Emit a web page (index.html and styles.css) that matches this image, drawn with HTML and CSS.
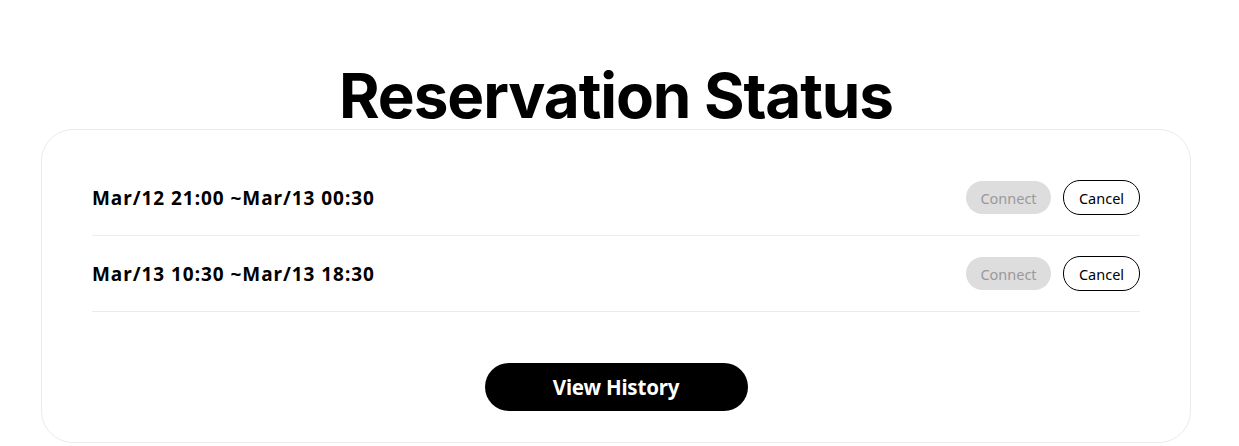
FILE: index.html
```html
<!DOCTYPE html>
<html lang="en">
<head>
<meta charset="utf-8">
<title>Reservation Status</title>
<link rel="stylesheet" href="styles.css">
</head>
<body>
<main class="page">
  <h1 class="title">Reservation Status</h1>
  <section class="card">
    <ul class="list">
      <li class="row">
        <span class="period">Mar/12 21:00 ~Mar/13 00:30</span>
        <div class="actions">
          <button class="btn btn-connect" disabled>Connect</button>
          <button class="btn btn-cancel">Cancel</button>
        </div>
      </li>
      <li class="row">
        <span class="period">Mar/13 10:30 ~Mar/13 18:30</span>
        <div class="actions">
          <button class="btn btn-connect" disabled>Connect</button>
          <button class="btn btn-cancel">Cancel</button>
        </div>
      </li>
    </ul>
    <div class="footer">
      <button class="btn-history">View History</button>
    </div>
  </section>
</main>
</body>
</html>
```
FILE: styles.css
```css
* { box-sizing: border-box; }
html, body { margin: 0; padding: 0; background: #fff; }
body { font-family: "Noto Sans", sans-serif; color: #000; }

.page {
  width: 1150px;
  margin-left: 41px;
  padding-top: 62px;
}

.title {
  margin: 0;
  text-align: center;
  font-family: "Inter", sans-serif;
  font-weight: 700;
  font-size: 62px;
  line-height: 67px;
  letter-spacing: -1.1px;
  height: 67px;
}

.card {
  border: 1px solid #ebebeb;
  border-radius: 32px;
  padding: 30px 50px 31px;
}

.list { list-style: none; margin: 0; padding: 0; }

.row {
  display: flex;
  align-items: center;
  justify-content: space-between;
  height: 76px;
  border-bottom: 1px solid #ebebeb;
}

.period {
  font-family: "Noto Sans", sans-serif;
  font-weight: 700;
  font-size: 19px;
  letter-spacing: 0.95px;
}

.actions { display: flex; align-items: center; gap: 12px; }

.btn {
  font-family: "Noto Sans", sans-serif;
  font-size: 14.5px;
  border-radius: 17px;
  padding: 0;
  display: flex;
  align-items: center;
  justify-content: center;
}

.btn-connect {
  width: 85px;
  height: 33px;
  background: #dddddd;
  color: #999999;
  border: none;
}

.btn-cancel {
  width: 77px;
  height: 35px;
  background: #fff;
  color: #000;
  border: 1px solid #000;
}

.footer {
  display: flex;
  justify-content: center;
  padding-top: 51px;
}

.btn-history {
  width: 263px;
  height: 48px;
  border: none;
  border-radius: 24px;
  background: #000;
  color: #fff;
  font-family: "Noto Sans", sans-serif;
  font-weight: 700;
  font-size: 20.5px;
  letter-spacing: -0.2px;
  padding-bottom: 2px;
}
```
